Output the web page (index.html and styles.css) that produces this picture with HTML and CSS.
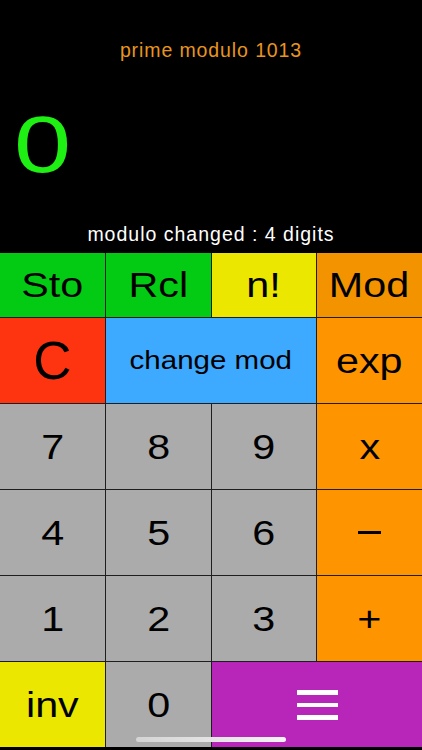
FILE: index.html
```html
<!DOCTYPE html>
<html>
<head>
<meta charset="utf-8">
<link rel="stylesheet" href="styles.css">
</head>
<body>
<div class="app">
  <header class="display">
    <div class="title">prime modulo 1013</div>
    <div class="value"><span class="num">0</span></div>
    <div class="status">modulo changed : 4 digits</div>
  </header>
  <main class="keys">
    <div class="key green"><span class="lbl">Sto</span></div>
    <div class="key green"><span class="lbl">Rcl</span></div>
    <div class="key yellow"><span class="lbl">n!</span></div>
    <div class="key orange-dark"><span class="lbl">Mod</span></div>
    <div class="key red big"><span class="lbl plain">C</span></div>
    <div class="key blue wide small"><span class="lbl">change mod</span></div>
    <div class="key orange"><span class="lbl">exp</span></div>
    <div class="key grey"><span class="lbl">7</span></div>
    <div class="key grey"><span class="lbl">8</span></div>
    <div class="key grey"><span class="lbl">9</span></div>
    <div class="key orange op"><span class="lbl">x</span></div>
    <div class="key grey"><span class="lbl">4</span></div>
    <div class="key grey"><span class="lbl">5</span></div>
    <div class="key grey"><span class="lbl">6</span></div>
    <div class="key orange op"><span class="minus"></span></div>
    <div class="key grey"><span class="lbl">1</span></div>
    <div class="key grey"><span class="lbl">2</span></div>
    <div class="key grey"><span class="lbl">3</span></div>
    <div class="key orange op"><span class="lbl">+</span></div>
    <div class="key yellow"><span class="lbl">inv</span></div>
    <div class="key grey"><span class="lbl">0</span></div>
    <div class="key purple wide">
      <span class="menu"><i></i><i></i><i></i></span>
    </div>
  </main>
  <div class="home"></div>
</div>
</body>
</html>
```
FILE: styles.css
```css
* { box-sizing: border-box; }
html, body {
  margin: 0;
  padding: 0;
  background: #000;
}
body {
  font-family: "Liberation Sans", Arial, sans-serif;
  width: 422px;
  height: 750px;
  overflow: hidden;
}
.app {
  position: relative;
  width: 422px;
  height: 750px;
  background: #000;
}
.display {
  height: 253px;
  display: flex;
  flex-direction: column;
}
.title {
  margin-top: 39px;
  text-align: center;
  color: #e8951f;
  font-size: 19.5px;
  letter-spacing: 0.9px;
  line-height: 22px;
}
.value {
  margin-top: 39px;
  height: 90px;
  padding-left: 14px;
  display: flex;
  align-items: flex-start;
}
.num {
  display: inline-block;
  color: #1ff014;
  font-size: 79px;
  line-height: 90px;
  transform: scaleX(1.3);
  transform-origin: left center;
}
.status {
  margin-top: 33px;
  text-align: center;
  color: #fff;
  font-size: 19.5px;
  letter-spacing: 1px;
  line-height: 22px;
}
.keys {
  display: grid;
  grid-template-columns: 105px 105px 104px 105px;
  grid-template-rows: 64px 85px 85px 85px 85px 85px;
  gap: 1px;
  background: #1e1e1e;
  height: 494px;
}
.key {
  display: flex;
  align-items: center;
  justify-content: center;
  color: #000;
  font-size: 35px;
}
.lbl {
  display: inline-block;
  transform: scaleX(1.18);
}
.lbl.plain { transform: none; }
.wide { grid-column: span 2; }
.big { font-size: 53px; }
.small { font-size: 25px; }
.op { font-size: 35px; }
.green { background: #03cb13; }
.yellow { background: #ebe701; }
.orange-dark { background: #f49300; }
.orange { background: #fe9500; }
.red { background: #fe3410; }
.blue { background: #3da9ff; }
.grey { background: #ababab; }
.purple { background: #b726b8; }
.minus {
  display: block;
  width: 23px;
  height: 3px;
  background: #000;
}
.menu {
  display: flex;
  flex-direction: column;
  gap: 8px;
  margin-top: 1px;
}
.menu i {
  display: block;
  width: 41px;
  height: 4.5px;
  background: #fff;
}
.home {
  position: absolute;
  left: 136px;
  top: 737px;
  width: 150px;
  height: 5px;
  border-radius: 3px;
  background: linear-gradient(90deg, #d4d4d4, #f4f4f4);
}
```
